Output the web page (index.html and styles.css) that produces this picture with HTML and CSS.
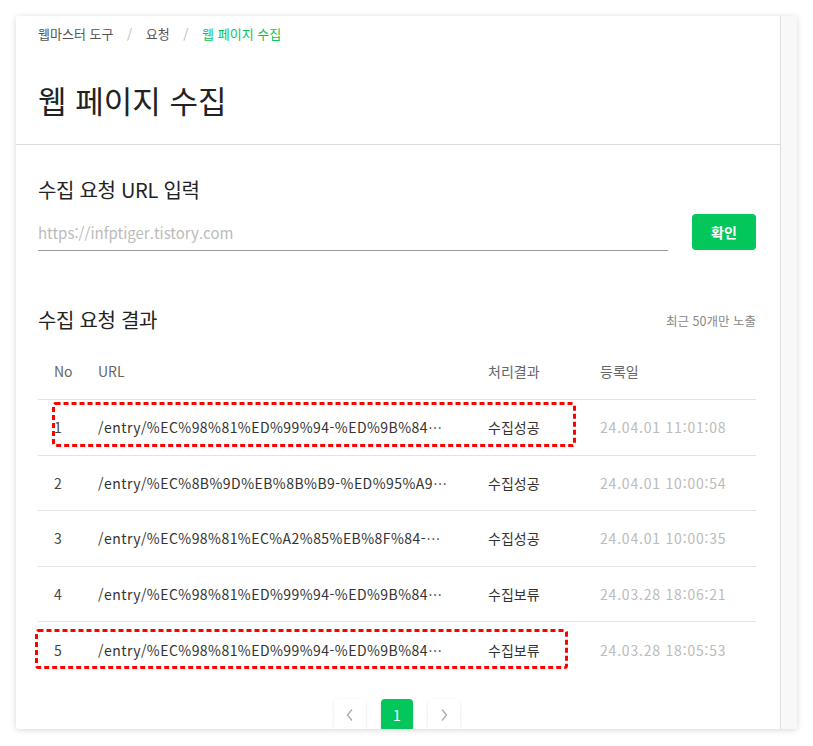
FILE: index.html
```html
<!DOCTYPE html>
<html lang="ko">
<head>
    <meta charset="UTF-8">
    <meta name="viewport" content="width=device-width, initial-scale=1.0">
    <title>웹 페이지 수집</title>
    <link rel="stylesheet" href="styles.css">
</head>
<body>
    <div class="card">
        <div class="content">
            <header class="page-header">
                <nav class="breadcrumb">
                    <span>웹마스터 도구</span>
                    <span class="sep">/</span>
                    <span>요청</span>
                    <span class="sep">/</span>
                    <span class="active">웹 페이지 수집</span>
                </nav>
                <h1>웹 페이지 수집</h1>
            </header>

            <section class="section url-section">
                <h2>수집 요청 URL 입력</h2>
                <form class="url-form" onsubmit="return false;">
                    <input type="text" placeholder="https://infptiger.tistory.com">
                    <button type="submit" class="btn-confirm">확인</button>
                </form>
            </section>

            <section class="section result-section">
                <div class="result-head">
                    <h2>수집 요청 결과</h2>
                    <span class="note">최근 50개만 노출</span>
                </div>

                <div class="table">
                    <div class="row head">
                        <div class="col-no">No</div>
                        <div class="col-url">URL</div>
                        <div class="col-status">처리결과</div>
                        <div class="col-date">등록일</div>
                    </div>
                    <div class="row">
                        <div class="col-no">1</div>
                        <div class="col-url">/entry/%EC%98%81%ED%99%94-%ED%9B%84%EA%B8%B0-%EB%B2%94%EC%A3%84%EB%8F%84%EC%8B%9C</div>
                        <div class="col-status">수집성공</div>
                        <div class="col-date">24.04.01 11:01:08</div>
                        <svg class="mark mark-1" width="524" height="45"><rect x="1.5" y="1.5" width="521" height="42" rx="2"/></svg>
                    </div>
                    <div class="row">
                        <div class="col-no">2</div>
                        <div class="col-url">/entry/%EC%8B%9D%EB%8B%B9-%ED%95%A9%EC%A0%95-%EB%A7%9B%EC%A7%91</div>
                        <div class="col-status">수집성공</div>
                        <div class="col-date">24.04.01 10:00:54</div>
                    </div>
                    <div class="row">
                        <div class="col-no">3</div>
                        <div class="col-url">/entry/%EC%98%81%EC%A2%85%EB%8F%84-%EC%B9%B4%ED%8E%98</div>
                        <div class="col-status">수집성공</div>
                        <div class="col-date">24.04.01 10:00:35</div>
                    </div>
                    <div class="row">
                        <div class="col-no">4</div>
                        <div class="col-url">/entry/%EC%98%81%ED%99%94-%ED%9B%84%EA%B8%B0-%EB%8D%94%EB%A1%9C%EB%93%9C</div>
                        <div class="col-status">수집보류</div>
                        <div class="col-date">24.03.28 18:06:21</div>
                    </div>
                    <div class="row">
                        <div class="col-no">5</div>
                        <div class="col-url">/entry/%EC%98%81%ED%99%94-%ED%9B%84%EA%B8%B0-%EB%93%84%EC%BD%94%EC%9D%B8</div>
                        <div class="col-status">수집보류</div>
                        <div class="col-date">24.03.28 18:05:53</div>
                        <svg class="mark mark-5" width="533" height="40"><rect x="1.5" y="1.5" width="530" height="37" rx="2"/></svg>
                    </div>
                </div>

                <div class="pagination">
                    <button class="page-btn" aria-label="이전">
                        <svg width="10" height="14" viewBox="0 0 10 14"><polyline points="7,1.5 2.5,7 7,12.5"/></svg>
                    </button>
                    <button class="page-btn current">1</button>
                    <button class="page-btn" aria-label="다음">
                        <svg width="10" height="14" viewBox="0 0 10 14"><polyline points="3,1.5 7.5,7 3,12.5"/></svg>
                    </button>
                </div>
            </section>
        </div>
        <div class="scroll-track"></div>
    </div>
</body>
</html>
```

FILE: styles.css
```css
html, body {
    margin: 0;
    background-color: #fff;
}
body {
    font-family: "Noto Sans CJK KR", "Noto Sans", sans-serif;
    color: #333;
    padding: 16px 16px 17px 16px;
}
.card {
    display: flex;
    height: 713px;
    background-color: white;
    border-radius: 3px;
    box-shadow: 0 1px 6px rgba(0, 0, 0, 0.16);
    overflow: hidden;
}
.content {
    flex: 1;
    overflow: hidden;
}
.scroll-track {
    width: 16px;
    background-color: #f8f8f8;
    border-left: 1px solid #dedede;
}
.page-header {
    padding: 8px 24px 24px 22px;
    border-bottom: 1px solid #ddd;
}
.breadcrumb {
    font-size: 13px;
    line-height: 20px;
    color: #555;
}
.breadcrumb .sep {
    color: #bbb;
    margin: 0 10px;
}
.breadcrumb .active {
    color: #03c75a;
}
h1 {
    margin: 35px 0 0 0;
    font-size: 31px;
    line-height: 41px;
    font-weight: 400;
    color: #222;
}
.section {
    padding: 0 24px 0 22px;
}
h2 {
    margin: 0;
    font-size: 20px;
    line-height: 28px;
    font-weight: 400;
    color: #222;
    letter-spacing: -0.3px;
}
.url-section {
    padding-top: 31px;
}
.url-form {
    display: flex;
    align-items: flex-end;
    gap: 24px;
    margin-top: 10px;
}
.url-form input {
    flex: 1;
    height: 36px;
    border: none;
    border-bottom: 1px solid #999;
    padding: 0;
    font-family: inherit;
    font-size: 15px;
    color: #333;
    outline: none;
}
.url-form input::placeholder {
    color: #bbb;
}
.btn-confirm {
    width: 64px;
    height: 36px;
    border: none;
    border-radius: 4px;
    background-color: #03c75a;
    color: white;
    font-family: inherit;
    font-size: 14px;
    font-weight: bold;
    margin-bottom: 1px;
}
.result-section {
    padding-top: 55px;
}
.result-head {
    display: flex;
    justify-content: space-between;
    align-items: center;
}
.note {
    font-size: 12.5px;
    color: #888;
}
.table {
    margin-top: 8px;
}
.row {
    position: relative;
    display: grid;
    grid-template-columns: 60px 390px 112px 1fr;
    align-items: center;
    height: 55.5px;
    box-sizing: border-box;
    border-bottom: 1px solid #e3e3e3;
    font-size: 14px;
    color: #333;
}
.row:last-child {
    border-bottom: none;
}
.row.head {
    height: 58px;
    color: #666;
}
.col-no {
    padding-left: 16px;
    color: #444;
}
.row.head .col-no {
    color: #666;
}
.col-url {
    padding-right: 40px;
    white-space: nowrap;
    overflow: hidden;
    text-overflow: ellipsis;
    letter-spacing: 0.45px;
}
.row.head .col-url {
    letter-spacing: 0;
}
.col-date {
    color: #bbb;
    letter-spacing: 0.8px;
}
.row.head .col-date {
    color: #666;
    letter-spacing: 0;
}
.mark {
    position: absolute;
}
.mark rect {
    fill: none;
    stroke: #f00;
    stroke-width: 3;
    stroke-dasharray: 5 3;
}
.mark-1 {
    left: 14px;
    top: 2px;
}
.mark-5 {
    left: -3px;
    top: 7px;
}
.pagination {
    display: flex;
    justify-content: center;
    gap: 15px;
    margin-top: 21px;
}
.page-btn {
    width: 32px;
    height: 32px;
    padding: 0;
    border: none;
    border-radius: 4px;
    background-color: white;
    box-shadow: 0 1px 3px rgba(0, 0, 0, 0.12);
    display: flex;
    align-items: center;
    justify-content: center;
    font-family: inherit;
    font-size: 14px;
    color: #999;
}
.page-btn svg polyline {
    fill: none;
    stroke: #aaa;
    stroke-width: 1.3;
}
.page-btn.current {
    background-color: #03c75a;
    color: white;
}
```
